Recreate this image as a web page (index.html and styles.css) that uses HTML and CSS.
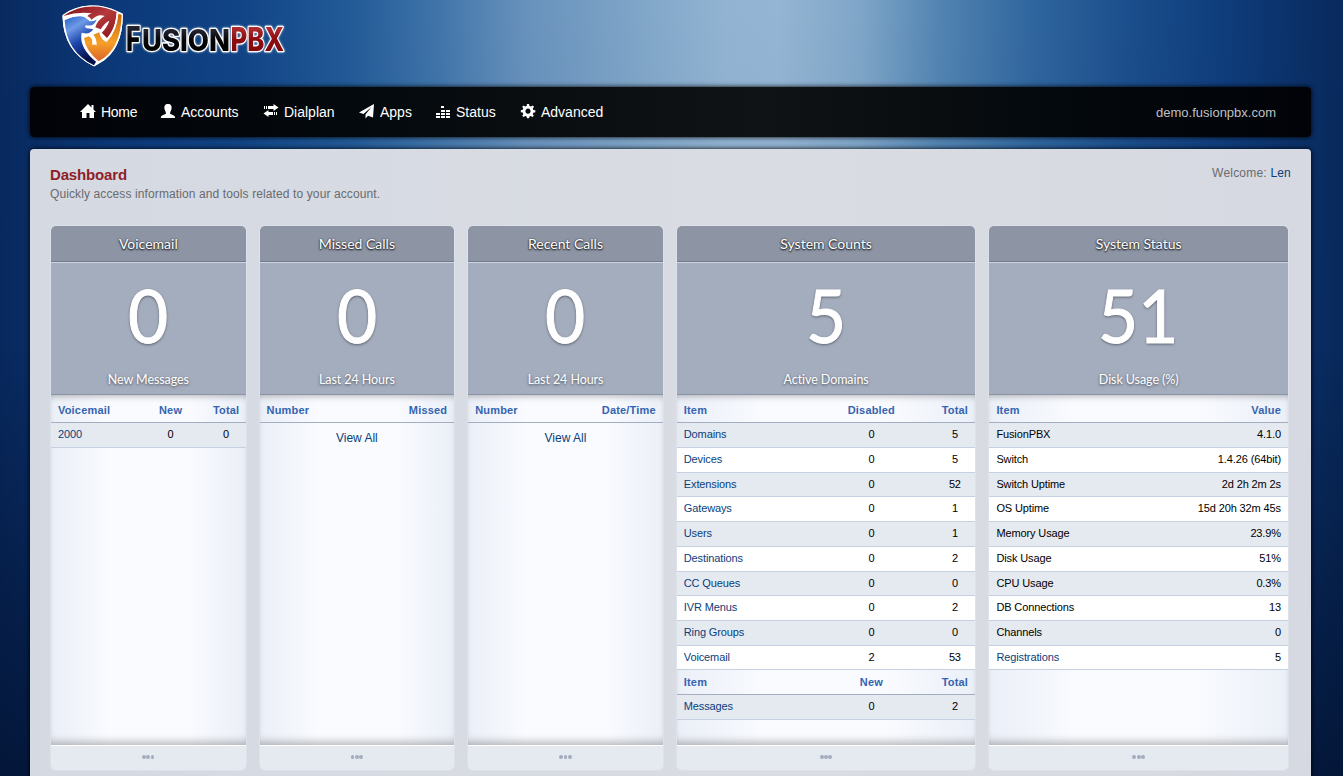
FILE: index.html
```html
<!DOCTYPE html>
<html lang="en">
<head>
<meta charset="utf-8">
<title>FusionPBX</title>
<link rel="stylesheet" href="styles.css">
</head>
<body>
<header class="brand">
  <svg class="logo" width="260" height="80" viewBox="56 0 260 80">
    <defs>
      <linearGradient id="red" x1="0" y1="0" x2="1" y2="1"><stop offset="0" stop-color="#7c1018"/><stop offset=".5" stop-color="#b53a3e"/><stop offset="1" stop-color="#8a1418"/></linearGradient>
      <linearGradient id="blue" x1="0" y1="0" x2="0.4" y2="1"><stop offset="0" stop-color="#1f5fc8"/><stop offset=".3" stop-color="#6f9ae6"/><stop offset=".6" stop-color="#1c46ae"/><stop offset="1" stop-color="#06104a"/></linearGradient>
      <linearGradient id="orange" x1="0" y1="0" x2="0" y2="1"><stop offset="0" stop-color="#c8600c"/><stop offset=".6" stop-color="#f6a028"/><stop offset="1" stop-color="#dc6428"/></linearGradient>
      <linearGradient id="ink" x1="0" y1="0" x2="0" y2="1"><stop offset="0" stop-color="#3a3d50"/><stop offset=".5" stop-color="#050508"/><stop offset="1" stop-color="#000"/></linearGradient>
      <linearGradient id="wine" x1="0" y1="0" x2="0" y2="1"><stop offset="0" stop-color="#c8474a"/><stop offset=".5" stop-color="#8e0c10"/><stop offset="1" stop-color="#7c0609"/></linearGradient>
    </defs>
    <g transform="translate(56 2) scale(.3333)">
      <path class="shield" d="M24 42C70 8 135 8 182 32L196 38Q196 142 128 180L114 188Q26 146 24 42Z"/>
      <path fill="url(#red)" d="M22 42C70 6 135 6 182 30C180 62 172 86 153 108L137 92Q153 78 160 56Q146 62 134 82L118 76Q124 54 146 42Q126 34 106 54L92 44Q98 36 108 34Q66 28 22 42Z"/>
      <path fill="url(#blue)" d="M26 55Q66 34 86 46L102 58Q112 58 122 53Q114 74 92 70Q84 70 90 78L112 82Q100 100 77 92Q68 140 122 176L114 190Q30 150 26 55Z"/>
      <path fill="url(#orange)" d="M187 36L197 38Q195 142 128 178Q88 144 84 108L98 103Q112 108 108 128Q118 126 122 130Q122 108 112 98L130 91Q134 114 152 120Q184 84 187 36Z"/>
      <path class="vein" d="M26 50Q84 30 104 52M84 96Q72 140 124 180M184 34Q180 88 153 114L134 92M112 93L114 84L128 86"/>
    </g>
    <g class="word">
      <text class="ink" x="126" y="51" font-size="34" textLength="14.500" lengthAdjust="spacingAndGlyphs">F</text>
      <text class="ink" x="142" y="51" font-size="29.500" textLength="88" lengthAdjust="spacingAndGlyphs">USION</text>
      <text class="wine" x="230.500" y="51" font-size="33" textLength="53.500" lengthAdjust="spacingAndGlyphs">PBX</text>
    </g>
  </svg>
</header>

<nav class="nav">
  <a class="item i1"><svg width="16" height="16" viewBox="0 0 16 16"><path d="M8 1L0 9H2V15H6.500V10H9.500V15H14V9H16L13.500 6.500V2H11.500V4.500Z"/></svg>Home</a>
  <a class="item i2"><svg width="16" height="16" viewBox="0 0 16 16"><path d="M8 1C5 1 4 3 4.500 6C5 8 6 9 6 10.500C5 12 1 11.500 .8 15H15.200C15 11.500 11 12 10 10.500C10 9 11 8 11.500 6C12 3 11 1 8 1Z"/></svg>Accounts</a>
  <a class="item i3"><svg width="16" height="16" viewBox="0 0 16 16"><path d="M10.500 1L15.500 4.500L10.500 8V6H5V3H10.500ZM1 3H2V6H1ZM3 3H4V6H3ZM5.500 7L.5 10.500L5.500 14V12H10V9H5.500ZM11 9H12V12H11ZM13 9H14V12H13Z"/></svg>Dialplan</a>
  <a class="item i4"><svg width="16" height="16" viewBox="0 0 16 16"><path d="M15 1L0 9.500L4.500 11L12.500 4L6.500 11.500V15.500L9 12.800L14 14.500Z"/></svg>Apps</a>
  <a class="item i5"><svg width="16" height="16" viewBox="0 0 16 16"><path d="M1 13h4v2H1zM1 10h4v2H1zM6 13h4v2H6zM6 10h4v2H6zM6 7h4v2H6zM6 3h3v2H6zM11 13h4v2h-4zM11 10h4v2h-4zM11 7h4v2h-4z"/></svg>Status</a>
  <a class="item i6"><svg width="16" height="16" viewBox="0 0 16 16"><path fill-rule="evenodd" d="M7 1H9L9.500 3L11 3.600L12.700 2.400L14 3.700L12.800 5.500L13.300 7L15.300 7.300V9.200L13.300 9.700L12.700 11L13.800 12.700L12.500 14L10.800 12.900L9.500 13.400L9 15.300H7L6.600 13.400L5.200 12.900L3.500 14L2.200 12.700L3.300 11L2.700 9.600L.8 9.200V7.300L2.700 6.800L3.300 5.500L2.200 3.800L3.500 2.500L5.200 3.600L6.600 3ZM8 5.600A2.600 2.600 0 1 0 8.010 5.600Z"/></svg>Advanced</a>
  <span class="domain">demo.fusionpbx.com</span>
</nav>

<main class="panel">
  <div class="intro">
    <div><h1>Dashboard</h1><p>Quickly access information and tools related to your account.</p></div>
    <div class="welcome">Welcome: <a>Len</a></div>
  </div>
  <div class="cards">
    <section class="card">
      <h2>Voicemail</h2>
      <div class="stat"><b>0</b><span>New Messages</span></div>
      <div class="detail three-s">
        <div class="row head"><span>Voicemail</span><span>New</span><span>Total</span></div>
        <div class="row odd"><a>2000</a><span>0</span><span>0</span></div>
      </div>
      <footer><i></i><i></i><i></i></footer>
    </section>
    <section class="card">
      <h2>Missed Calls</h2>
      <div class="stat"><b>0</b><span>Last 24 Hours</span></div>
      <div class="detail two">
        <div class="row head"><span>Number</span><span>Missed</span></div>
        <a class="all">View All</a>
      </div>
      <footer><i></i><i></i><i></i></footer>
    </section>
    <section class="card">
      <h2>Recent Calls</h2>
      <div class="stat"><b>0</b><span>Last 24 Hours</span></div>
      <div class="detail two">
        <div class="row head"><span>Number</span><span>Date/Time</span></div>
        <a class="all">View All</a>
      </div>
      <footer><i></i><i></i><i></i></footer>
    </section>
    <section class="card">
      <h2>System Counts</h2>
      <div class="stat"><b>5</b><span>Active Domains</span></div>
      <div class="detail three">
        <div class="row head"><span>Item</span><span>Disabled</span><span>Total</span></div>
        <div class="row odd"><a>Domains</a><span>0</span><span>5</span></div>
        <div class="row"><a>Devices</a><span>0</span><span>5</span></div>
        <div class="row odd"><a>Extensions</a><span>0</span><span>52</span></div>
        <div class="row"><a>Gateways</a><span>0</span><span>1</span></div>
        <div class="row odd"><a>Users</a><span>0</span><span>1</span></div>
        <div class="row"><a>Destinations</a><span>0</span><span>2</span></div>
        <div class="row odd"><a>CC Queues</a><span>0</span><span>0</span></div>
        <div class="row"><a>IVR Menus</a><span>0</span><span>2</span></div>
        <div class="row odd"><a>Ring Groups</a><span>0</span><span>0</span></div>
        <div class="row"><a>Voicemail</a><span>2</span><span>53</span></div>
        <div class="row head sub"><span>Item</span><span>New</span><span>Total</span></div>
        <div class="row odd"><a>Messages</a><span>0</span><span>2</span></div>
      </div>
      <footer><i></i><i></i><i></i></footer>
    </section>
    <section class="card">
      <h2>System Status</h2>
      <div class="stat"><b>51</b><span>Disk Usage (%)</span></div>
      <div class="detail two">
        <div class="row head"><span>Item</span><span>Value</span></div>
        <div class="row odd"><span>FusionPBX</span><span>4.1.0</span></div>
        <div class="row"><span>Switch</span><span>1.4.26 (64bit)</span></div>
        <div class="row odd"><span>Switch Uptime</span><span>2d 2h 2m 2s</span></div>
        <div class="row"><span>OS Uptime</span><span>15d 20h 32m 45s</span></div>
        <div class="row odd"><span>Memory Usage</span><span>23.9%</span></div>
        <div class="row"><span>Disk Usage</span><span>51%</span></div>
        <div class="row odd"><span>CPU Usage</span><span>0.3%</span></div>
        <div class="row"><span>DB Connections</span><span>13</span></div>
        <div class="row odd"><span>Channels</span><span>0</span></div>
        <div class="row"><a>Registrations</a><span>5</span></div>
      </div>
      <footer><i></i><i></i><i></i></footer>
    </section>
  </div>
</main>
</body>
</html>
```
FILE: styles.css
```css
* { box-sizing: border-box; }
body {
  margin: 0;
  height: 776px;
  overflow: hidden;
  font-family: "Liberation Sans", Arial, sans-serif;
  background:
    linear-gradient(180deg, rgba(2,20,55,0) 0%, rgba(2,20,55,.05) 45%, rgba(2,16,44,.75) 100%),
    linear-gradient(90deg, #08295f 0%, #0b3878 8%, #114486 18%, #225a97 26%, #3d72a8 32%, #6791bc 39%, #7ba2c6 46%, #92b4d2 54%, #94b5d3 58%, #7fa6c8 64%, #5284b2 70%, #2f659e 77%, #1b4e8c 84%, #0f3d7c 91%, #08295c 100%);
}
.brand { height: 87px; padding-left: 56px; }
.logo { display: block; overflow: visible; }
.shield { fill: #fff; stroke: #fff; stroke-width: 9; stroke-linejoin: round; filter: drop-shadow(0 0 1px #fff); }
.vein { fill: none; stroke: #fff; stroke-width: 4; stroke-linecap: round; }
.word { font-family: Inter, sans-serif; font-weight: 800; stroke: #fff; stroke-width: 2.6; paint-order: stroke; stroke-linejoin: round; filter: drop-shadow(0 0 1px rgba(255,255,255,.7)); }
.ink { fill: url(#ink); }
.wine { fill: url(#wine); }

.nav {
  position: relative;
  display: flex;
  align-items: center;
  height: 50px;
  margin: 0 32px 12px 30px;
  padding: 0 35px 0 50px;
  border-radius: 4px;
  background: linear-gradient(90deg, #010308, #04090d 25%, #101315 57%, #04090d 80%, #010308);
  box-shadow: 0 0 5px #000;
  color: #fff;
  font-size: 14px;
}
.item { display: flex; align-items: center; gap: 5px; white-space: nowrap; }
.item svg { fill: #fff; position: relative; top: -1px; }
.i1 { width: 80px; letter-spacing: -.3px; }
.i2 { width: 103px; }
.i3 { width: 96px; }
.i4 { width: 76px; }
.i5 { width: 85px; }
.domain { margin-left: auto; font-size: 13px; color: #bfc0c2; }

.panel {
  height: 640px;
  margin: 0 32px 0 30px;
  padding: 16px 23px 0 21px;
  border-radius: 4px;
  background: linear-gradient(90deg, #d5d9e2, #d9dce2 57%, #d6d9e1);
  box-shadow: 0 0 5px #000;
}
.intro { display: flex; justify-content: space-between; height: 61px; margin: 0 -3px 0 -1px; font-size: 12px; color: #696b6e; }
h1 { margin: 0; font-size: 15px; line-height: 20px; letter-spacing: -.15px; color: #8e2128; }
p { margin: 0; line-height: 19px; letter-spacing: .11px; }
.welcome { line-height: 16px; letter-spacing: .2px; }
a { color: #0a3e7c; }
.nav a { color: #fff; }
.cards { display: grid; grid-template-columns: repeat(3, 194.600px) repeat(2, 298.600px); gap: 14px; }
.card { height: 544px; border-radius: 5px; overflow: hidden; box-shadow: 0 0 0 1px #dde1e9; display: flex; flex-direction: column; }
h2 {
  margin: 0;
  height: 36px;
  text-align: center;
  font: 400 14px/36px Lato, sans-serif;
  color: #fff;
  background: #8d94a4;
  border-bottom: 1px solid #717a8b;
  text-shadow: 0 1px 2px #000, 0 0 2px rgba(0,0,0,.5);
}
.stat {
  height: 133px;
  display: flex;
  flex-direction: column;
  align-items: center;
  font-family: Lato, sans-serif;
  color: #fff;
  background: #a4adbe;
  border-top: 1px solid #ccd5e4;
  border-bottom: 1px solid #8b94a4;
  text-shadow: 0 1px 3px rgba(0,0,0,.6);
}
.stat b { font-weight: 400; font-size: 73px; line-height: 104px; height: 108px; -webkit-text-stroke: 1px #fff; transform: scaleX(.95); }
.stat span { font-size: 12.500px; line-height: 18px; letter-spacing: -.08px; }
.detail {
  height: 350px;
  background: linear-gradient(90deg, #ebeff7, #f9fbff 30%, #f9fbff 70%, #ebeff7);
  box-shadow: inset 0 7px 7px -6px rgba(0,0,0,.3), inset 0 -8px 8px -5px rgba(0,0,0,.28);
  font-size: 11px;
}
.row {
  display: grid;
  height: 24.700px;
  line-height: 23px;
  padding: 0 7px;
  border-bottom: 1px solid #c5d1e0;
  background: #fff;
  letter-spacing: -.12px;
}
.odd { background: #e5e9f0; }
.head { height: 28.400px; line-height: 31px; background: none; color: #3464b0; font-weight: 700; border-color: #a4adc2; letter-spacing: .18px; }
.sub { height: 24.700px; line-height: 24px; }
.two .row { grid-template-columns: 1fr auto; }
.three .row { grid-template-columns: 1fr 80px 27px; column-gap: 30px; }
.three-s .row { grid-template-columns: 1fr 50px 27px; column-gap: 17px; padding-right: 6px; }
.three .row :nth-child(n+2), .three-s .row :nth-child(n+2) { text-align: center; }
.all { display: block; text-align: center; font-size: 12px; line-height: 30px; }
footer { height: 25px; padding-bottom: 2px; border-top: 1px solid #fff; background: #e5e9f0; display: flex; justify-content: center; align-items: center; gap: .5px; }
footer i { width: 3.800px; height: 4px; border-radius: 50%; background: #a4adbe; }
```
